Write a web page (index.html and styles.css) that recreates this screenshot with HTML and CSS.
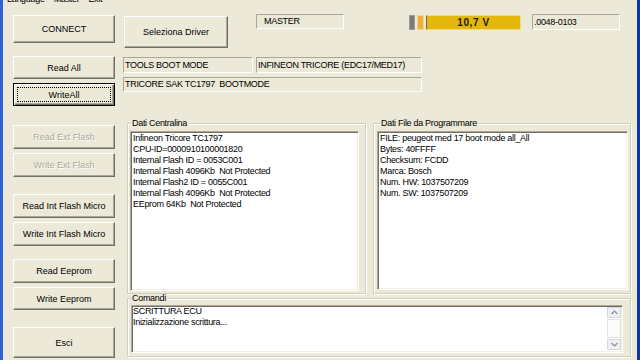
FILE: index.html
```html
<!DOCTYPE html>
<html lang="it">
<head>
<meta charset="UTF-8">
<meta name="viewport" content="width=device-width, initial-scale=1.0">
<title>ECU Programmer</title>
<link rel="stylesheet" href="styles.css">
</head>
<body>
<div class="window">
    <div class="menubar">
        <span>Language</span>
        <span>Master</span>
        <span>Exit</span>
    </div>
    <div class="main">
        <div class="side">
            <div class="btn-group grp-connect">
                <button class="btn btn-connect">CONNECT</button>
            </div>
            <div class="btn-group grp-all">
                <button class="btn btn-sm">Read All</button>
                <button class="btn btn-sm btn-default">WriteAll</button>
            </div>
            <div class="btn-group grp-ext">
                <button class="btn" disabled>Read Ext Flash</button>
                <button class="btn" disabled>Write Ext Flash</button>
            </div>
            <div class="btn-group grp-int">
                <button class="btn">Read Int Flash Micro</button>
                <button class="btn">Write Int Flash Micro</button>
            </div>
            <div class="btn-group grp-eep">
                <button class="btn">Read Eeprom</button>
                <button class="btn btn-sm">Write Eeprom</button>
            </div>
            <div class="btn-group grp-exit">
                <button class="btn btn-exit">Esci</button>
            </div>
        </div>

        <div class="content">
            <div class="row row-top">
                <button class="btn btn-driver">Seleziona Driver</button>
                <div class="field field-master">MASTER</div>
                <div class="volt">
                    <span class="volt-off"></span>
                    <span class="volt-low"></span>
                    <span class="volt-bar">10,7 V</span>
                </div>
                <div class="field field-serial">.0048-0103</div>
            </div>
            <div class="row row-mode">
                <div class="field field-boot">TOOLS BOOT MODE</div>
                <div class="field field-cpu">INFINEON TRICORE (EDC17/MED17)</div>
            </div>
            <div class="row row-chip">
                <div class="field field-chip">TRICORE SAK TC1797&nbsp; BOOTMODE</div>
            </div>

            <div class="groups">
                <fieldset class="group group-ecu">
                    <legend>Dati Centralina</legend>
                    <div class="listbox list-ecu">
                        <div>Infineon Tricore TC1797</div>
                        <div>CPU-ID=0000910100001820</div>
                        <div>Internal Flash ID = 0053C001</div>
                        <div>Internal Flash 4096Kb&nbsp; Not Protected</div>
                        <div>Internal Flash2 ID = 0055C001</div>
                        <div>Internal Flash 4096Kb&nbsp; Not Protected</div>
                        <div>EEprom 64Kb&nbsp; Not Protected</div>
                    </div>
                </fieldset>
                <fieldset class="group group-file">
                    <legend>Dati File da Programmare</legend>
                    <div class="listbox list-file">
                        <div>FILE: peugeot med 17 boot mode all_All</div>
                        <div>Bytes: 40FFFF</div>
                        <div>Checksum: FCDD</div>
                        <div>Marca: Bosch</div>
                        <div>Num. HW: 1037507209</div>
                        <div>Num. SW: 1037507209</div>
                    </div>
                </fieldset>
            </div>

            <fieldset class="group group-cmd">
                <legend>Comandi</legend>
                <div class="listbox textbox">
                    <div class="text-lines">
                        <div>SCRITTURA ECU</div>
                        <div>Inizializzazione scrittura...</div>
                    </div>
                    <div class="scroll">
                        <span class="scroll-btn">
                            <svg width="7" height="5" viewBox="0 0 7 5"><polyline points="0.5,4 3.5,1 6.5,4" fill="none" stroke="#8a8f9c" stroke-width="1.2"/></svg>
                        </span>
                        <span class="scroll-track"></span>
                        <span class="scroll-btn">
                            <svg width="7" height="5" viewBox="0 0 7 5"><polyline points="0.5,1 3.5,4 6.5,1" fill="none" stroke="#8a8f9c" stroke-width="1.2"/></svg>
                        </span>
                    </div>
                </div>
            </fieldset>
        </div>
    </div>
</div>
</body>
</html>
```

FILE: styles.css
```css
* {
    box-sizing: border-box;
}

body {
    margin: 0;
    background-color: #ECE9D8;
    font-family: "Liberation Sans", Arial, sans-serif;
    font-size: 9px;
    letter-spacing: -0.3px;
    color: #000;
}

.window {
    width: 640px;
    height: 360px;
    overflow: hidden;
    display: flex;
    flex-direction: column;
    border-left: 3px solid #2E63D6;
    border-right: 3px solid #0A36B4;
}

.menubar {
    height: 6px;
    overflow: hidden;
    display: flex;
    gap: 9px;
    padding-left: 4px;
}

.menubar span {
    line-height: 11px;
    margin-top: -6px;
}

.main {
    display: flex;
    gap: 8px;
    padding-left: 10px;
}

/* left column of buttons */
.side {
    width: 102px;
    display: flex;
    flex-direction: column;
}

.btn-group {
    display: flex;
    flex-direction: column;
    gap: 4px;
}

.grp-connect { margin-top: 9px; }
.grp-all     { margin-top: 13px; }
.grp-ext     { margin-top: 19px; }
.grp-int     { margin-top: 17px; }
.grp-eep     { margin-top: 13px; }
.grp-exit    { margin-top: 17px; }

.btn {
    height: 24px;
    padding: 0;
    font: inherit;
    color: #000;
    background-color: #ECE9D8;
    border: 1px solid;
    border-color: #fff #716F64 #716F64 #fff;
    box-shadow: inset -1px -1px 0 #ACA899;
    border-radius: 0;
}

.btn:disabled {
    color: #ACA899;
    text-shadow: 1px 1px 0 #fff;
}

.btn-connect { height: 28px; }
.btn-sm      { height: 23px; }
.btn-exit    { height: 31px; }

.btn-default {
    border-color: #000;
    box-shadow: inset 1px 1px 0 #fff, inset -1px -1px 0 #716F64, inset -2px -2px 0 #ACA899;
    outline: 1px dotted #000;
    outline-offset: -5px;
}

/* right side */
.content {
    width: 514px;
    display: flex;
    flex-direction: column;
}

.row {
    display: flex;
    align-items: flex-start;
}

.row-top  { margin-top: 8px; }
.row-mode { margin-top: 9px; gap: 3px; }
.row-chip { margin-top: 4px; }

.btn-driver {
    width: 104px;
    height: 32px;
    margin-left: 1px;
    margin-top: 2px;
}

.field {
    height: 16px;
    line-height: 14px;
    padding-left: 1px;
    white-space: nowrap;
    overflow: hidden;
    border: 1px solid;
    border-color: #ACA899 #fff #fff #ACA899;
}

.field-master {
    width: 88px;
    height: 15px;
    line-height: 13px;
    margin-left: 28px;
    padding-left: 7px;
}

.field-serial {
    width: 88px;
    margin-left: 11px;
}

.field-boot { width: 130px; }
.field-cpu  { width: 166px; }

.field-chip {
    width: 299px;
    height: 15px;
    line-height: 13px;
}

.volt {
    display: flex;
    height: 15px;
    margin-top: 1px;
    margin-left: 65px;
}

.volt-off {
    width: 6px;
    background-color: #7A7A78;
    border: 1px solid #9c9c98;
}

.volt-low {
    width: 7px;
    margin-left: 2px;
    background-color: #EFB13C;
    border: 1px solid #F7D48E;
}

.volt-bar {
    width: 95px;
    margin-left: 2px;
    background-color: #E4B70C;
    border: 1px solid #F3DA7C;
    border-left: 1px solid #6f6a55;
    text-align: center;
    font-weight: bold;
    font-size: 10px;
    letter-spacing: 0.6px;
    line-height: 13px;
    color: #1e1a08;
}

/* group boxes */
.groups {
    display: flex;
    gap: 7px;
    margin-top: 27px;
    margin-left: 4px;
}

.group {
    margin: 0;
    min-width: 0;
    border: 1px solid #D0D0BF;
    box-shadow: inset 1px 1px 0 #fff, 1px 1px 0 #fff;
}

.group legend {
    padding: 0 1px;
    line-height: 9px;
    background-color: #ECE9D8;
}

.group-ecu {
    width: 239px;
    padding: 3px 6px 2px 2px;
}

.group-ecu legend { margin-left: 1px; }

.group-file {
    width: 258px;
    padding: 3px 2px 2px 3px;
}

.group-file legend { margin-left: 3px; }

.group-cmd {
    width: 504px;
    margin-left: 4px;
    padding: 2px 7px 3px 3px;
}

.group-cmd legend { margin-left: 0; }

.listbox {
    background-color: #fff;
    border: 1px solid;
    border-color: #ACA899 #fff #fff #ACA899;
    box-shadow: inset 1px 1px 0 #716F64, inset -1px -1px 0 #F1EFE2;
    padding: 1px 2px;
    line-height: 11px;
    white-space: nowrap;
    overflow: hidden;
}

.list-ecu  { height: 160px; }
.list-file { height: 159px; }

.textbox {
    height: 48px;
    display: flex;
    padding: 0 1px 1px 1px;
}

.text-lines {
    flex: 1;
    padding-top: 0;
}

.scroll {
    width: 14px;
    display: flex;
    flex-direction: column;
    padding: 1px 0;
}

.scroll-btn {
    height: 11px;
    display: flex;
    align-items: center;
    justify-content: center;
    background-color: #EEF0F3;
    border: 1px solid #D5D8DF;
}

.scroll-track {
    flex: 1;
    margin: 1px 0;
    background-color: #FBFBF9;
    border: 1px solid #E4E4DE;
}
```
